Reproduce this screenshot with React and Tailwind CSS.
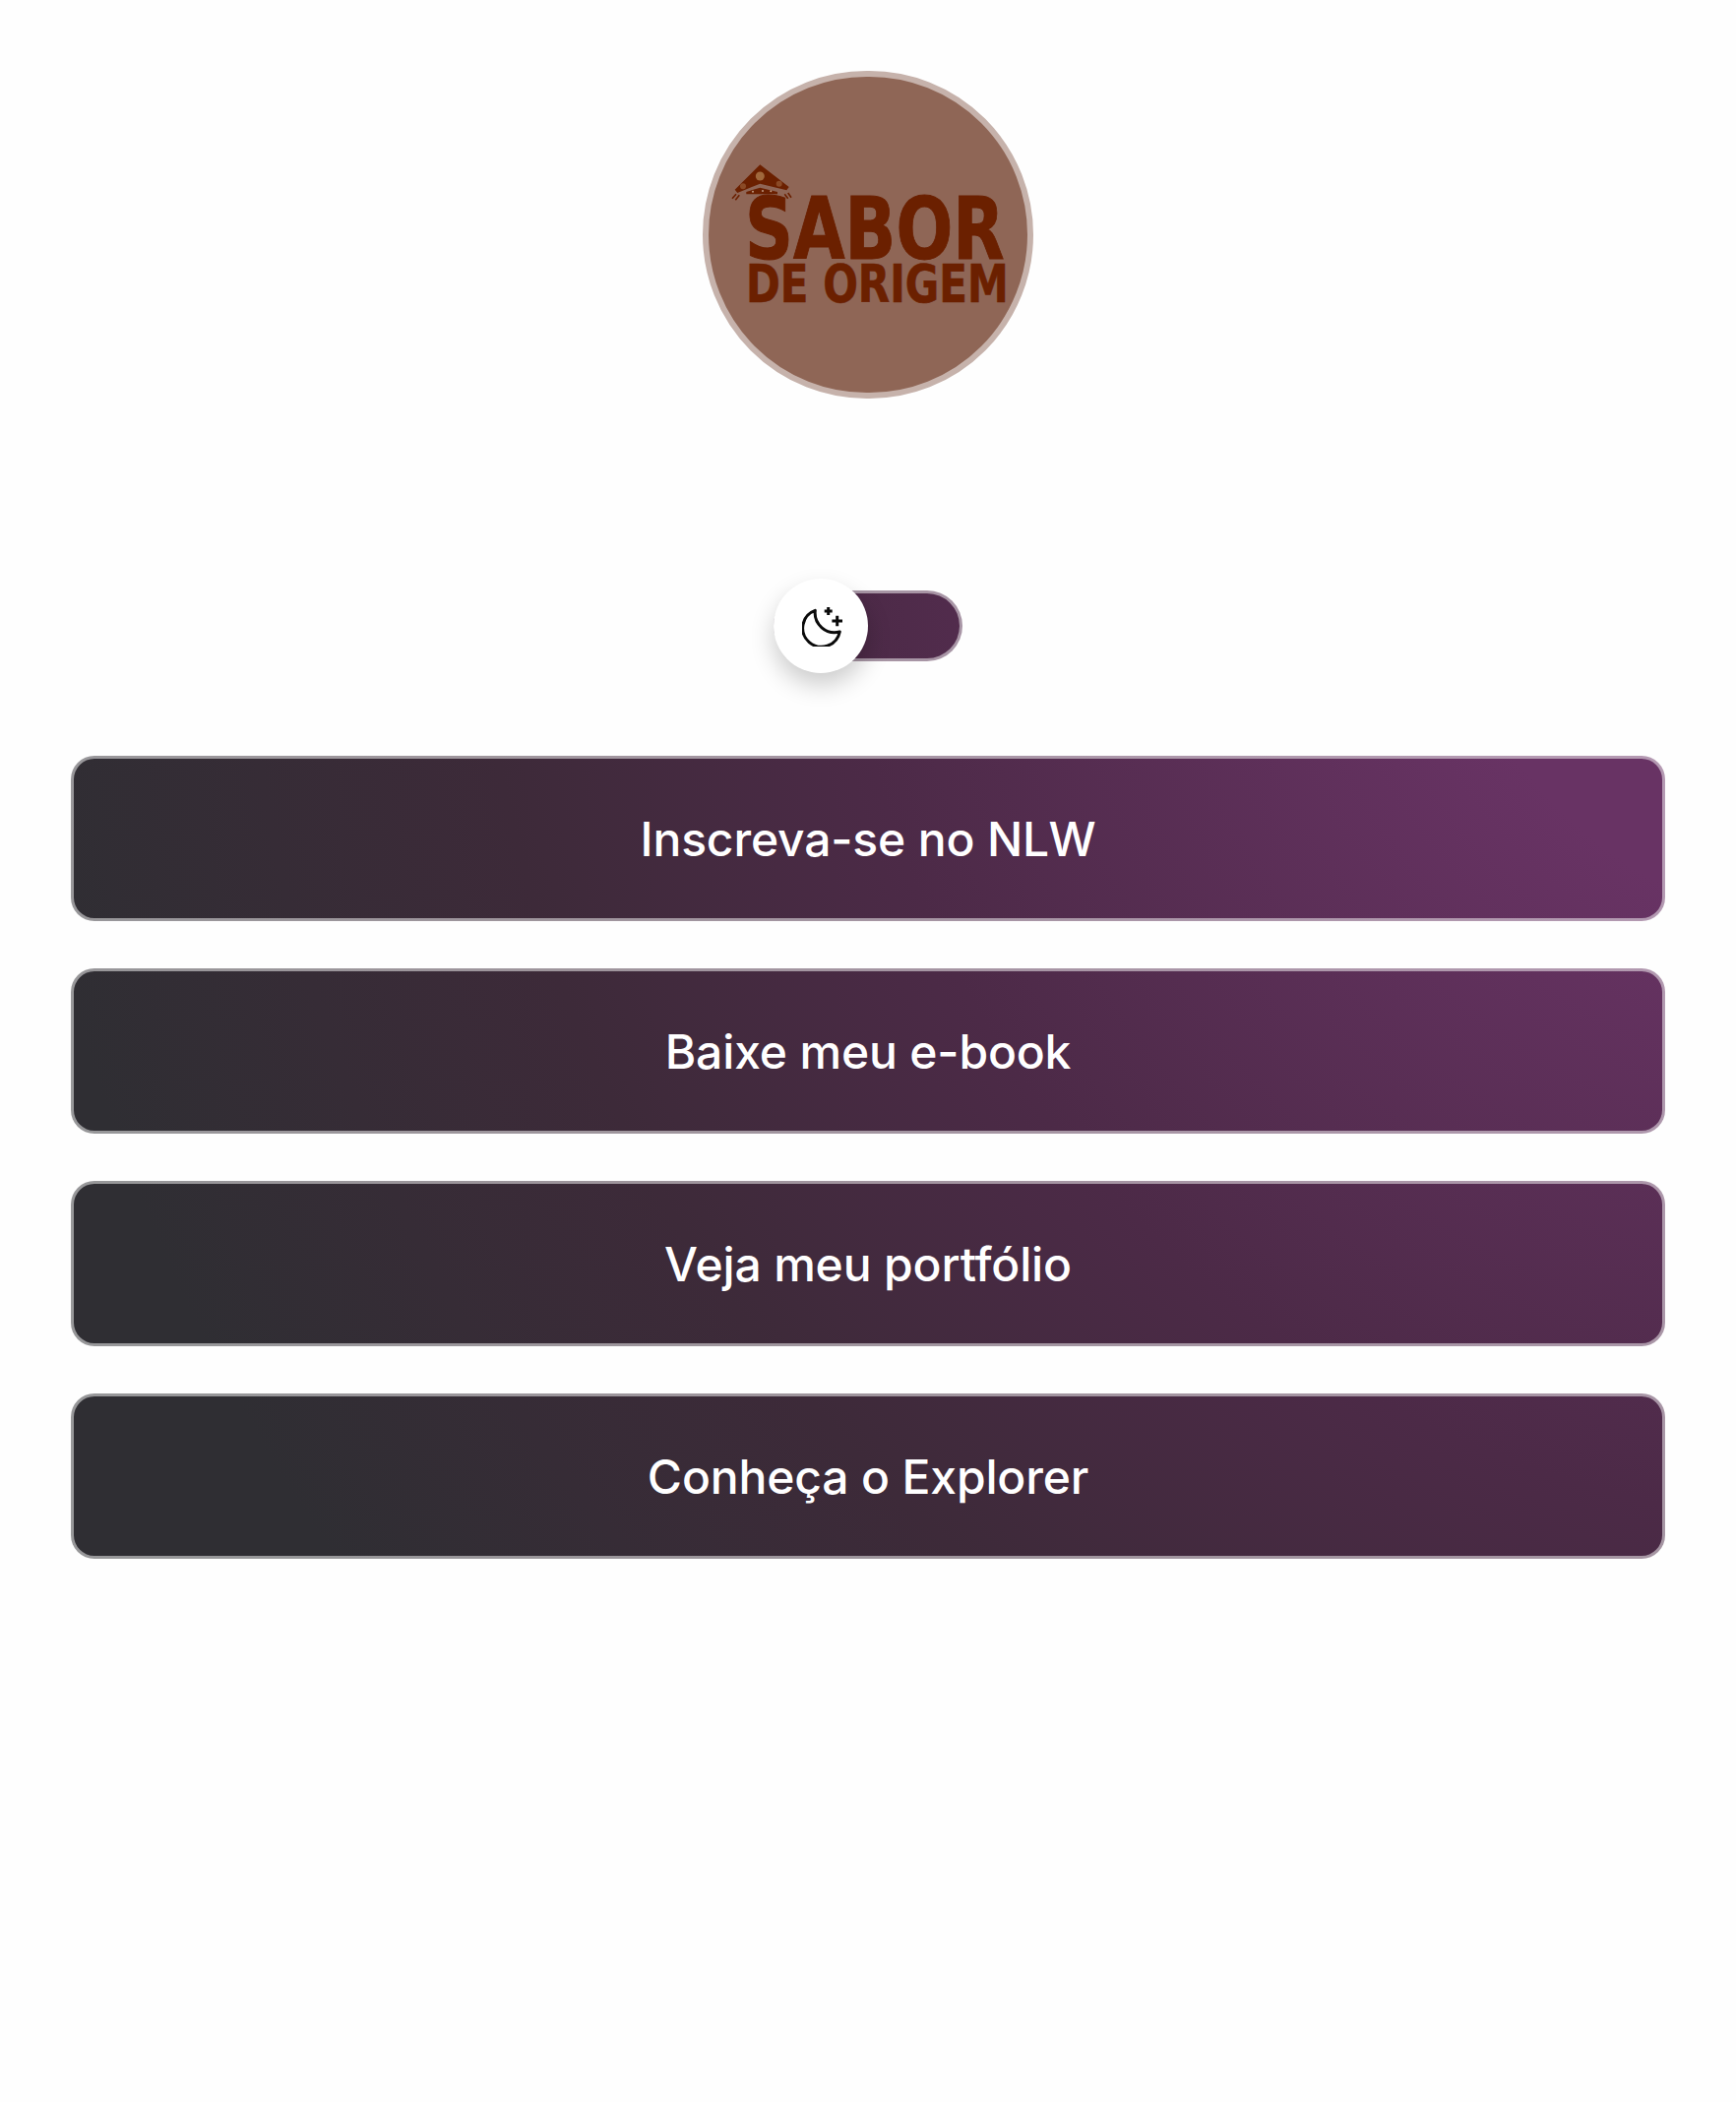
import React from 'react';

const links = ['Inscreva-se no NLW', 'Baixe meu e-book', 'Veja meu portfólio', 'Conheça o Explorer'];

const Logo = () => (
  <div className="w-[336px] h-[333px] mx-auto rounded-full border-[6px] border-[#c6b2ab] bg-[#8f6656] overflow-hidden">
    <svg viewBox="0 0 324 321" className="block w-full h-full">
      {/* roof */}
      <polygon points="52.3,89.3 81.7,112 79.3,115.3 52.3,108.7 29.3,118 26.7,114.7" fill="#6b2000" />
      <polygon points="38.3,117 52.3,112.7 70,117 70,119.3 38.3,119.3" fill="#6b2000" />
      <circle cx="52.3" cy="101" r="4.5" fill="#a0683c" />
      <circle cx="35" cy="111.3" r="3" fill="#8a4a26" />
      <circle cx="71.7" cy="108.7" r="3" fill="#8a4a26" />
      <circle cx="45" cy="116.7" r="1" fill="#c09a80" />
      <circle cx="55" cy="116" r="1" fill="#c09a80" />
      <circle cx="63.3" cy="116.3" r="1" fill="#c09a80" />
      <path d="M24 123.7L28 119.3M27.3 125.3L31.3 120.3M77.3 119.3L80.7 123.7M80.7 118L84 122.7" stroke="#6b2000" strokeWidth="1.6" />
      <g fill="#6b2000" stroke="#6b2000" fontFamily="'DejaVu Sans', sans-serif" fontWeight="700">
        <text transform="translate(37 185) scale(1 1.29)" fontSize="68" strokeWidth="0.8">SABOR</text>
        <text transform="translate(38 229) scale(1 1.27)" fontSize="42" strokeWidth="0.5">DE ORIGEM</text>
      </g>
    </svg>
  </div>
);

const MoonStars = () => (
  <svg width="42" height="42" viewBox="0 0 42 42" fill="none" stroke="#0a0a0a" strokeWidth="3" strokeLinejoin="round" className="ml-[4px]">
    <path d="M13.3 5.3A19 19 0 1 0 38.3 27A20 20 0 0 1 13.3 5.3Z" />
    <path d="M26.7 2V10M22.7 6H30.7" />
    <path d="M35.7 10.7V21.3M30.4 16H41" />
  </svg>
);

export default function App() {
  return (
    <div className="min-h-[2136px] bg-[#fefefe] px-[72px] pt-[72px]" style={{ fontFamily: 'Inter, sans-serif' }}>
      <Logo />

      <div className="relative w-[192px] h-[72px] mx-auto mt-[195px] rounded-full border-[3px] border-white/50 bg-fixed bg-[radial-gradient(circle_at_1900px_500px,#683364_450px,#4c2a47_1050px,#3d2a39_1420px,#2f2e33_1900px)]">
        <div className="absolute top-[-15px] left-[-3px] w-[96px] h-[96px] rounded-full bg-white flex items-center justify-center shadow-[0_12px_24px_rgba(0,0,0,0.2)]">
          <MoonStars />
        </div>
      </div>

      <ul className="flex flex-col gap-[48px] mt-[96px]">
        {links.map((label) => (
          <li key={label}>
            <a
              href="#"
              className="flex items-center justify-center h-[168px] pt-[2px] rounded-[24px] border-[3px] border-white/50 bg-fixed bg-[radial-gradient(circle_at_1900px_500px,#683364_450px,#4c2a47_1050px,#3d2a39_1420px,#2f2e33_1900px)] text-white text-[48px] font-medium tracking-[-0.15px]"
            >
              {label}
            </a>
          </li>
        ))}
      </ul>
    </div>
  );
}
